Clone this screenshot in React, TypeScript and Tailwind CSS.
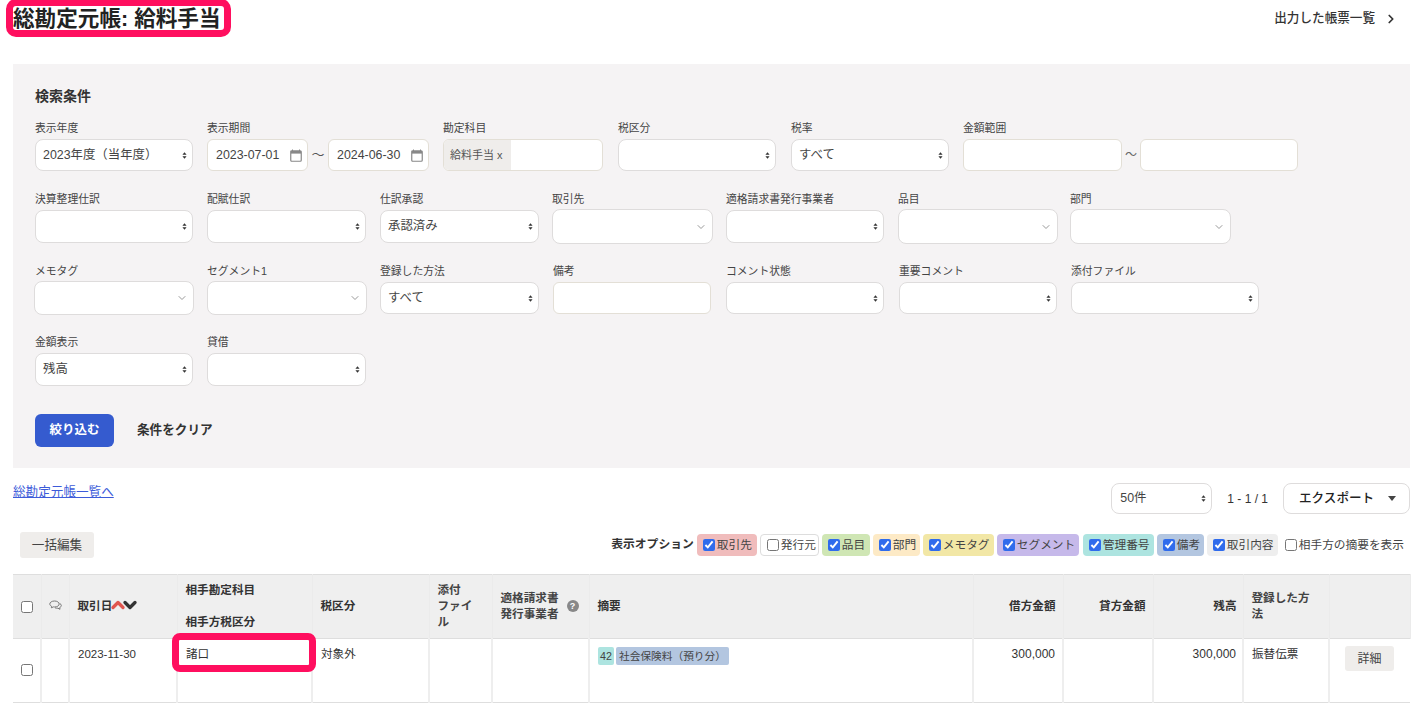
import type { ReactNode } from "react"
import { ChevronDown, ChevronRight, ChevronUp } from "lucide-react"

const Arrows = () => (
  <svg width="5" height="9" viewBox="0 0 6 10" className="shrink-0">
    <path d="M3 1 L5.5 4 H0.5 Z M3 9 L0.5 6 H5.5 Z" fill="#333" />
  </svg>
)

const CalendarIcon = () => (
  <svg width="12" height="13" viewBox="0 0 12 13" className="shrink-0">
    <path d="M2.5 0.5v2M9.5 0.5v2" stroke="#888" strokeWidth="1" />
    <rect x="0.75" y="1.75" width="10.5" height="10.5" rx="1" fill="none" stroke="#888" strokeWidth="1.2" />
    <rect x="1" y="2" width="10" height="2.6" fill="#888" />
  </svg>
)

const CommentIcon = () => (
  <svg width="13" height="11" viewBox="0 0 13 11" fill="none" stroke="#777" strokeWidth="1">
    <path d="M5.5 1C2.9 1 .8 2.3 .8 4c0 1 .7 1.8 1.8 2.3L2.4 7.8 4.4 6.9c.4.1.7.1 1.1.1 2.6 0 4.7-1.3 4.7-3S8.100 1 5.500 1Z" />
    <path d="M10.800 3.500c1 .5 1.500 1.200 1.500 2 0 .9-.6 1.600-1.600 2.100l.3 1.700-2.100-1.100c-.9.1-2 0-2.900-.4" />
  </svg>
)

function Select({ className, children }: { className: string; children?: ReactNode }) {
  return (
    <div className={`flex items-center justify-between bg-white border border-[#dedcdc] rounded-lg pl-[7px] pr-[5px] text-[12.4px] text-[#444] ${className}`}>
      <span>{children}</span>
      <Arrows />
    </div>
  )
}

function Combo({ className }: { className: string }) {
  return (
    <div className={`flex items-center justify-end bg-white border border-[#dedcdc] rounded-lg pr-[5px] ${className}`}>
      <ChevronDown size={12} color="#999" />
    </div>
  )
}

function Field({ label, className, children }: { label: string; className: string; children: ReactNode }) {
  return (
    <div className={className}>
      <div className="text-[10.8px] leading-[14px] text-[#444]">{label}</div>
      {children}
    </div>
  )
}

function DateInput({ value }: { value: string }) {
  return (
    <div className="flex items-center justify-between w-[101px] h-8 bg-white border border-[#e3dfd6] rounded-md pl-2 pr-[5px] text-[12.4px] text-[#444]">
      <span>{value}</span>
      <CalendarIcon />
    </div>
  )
}

function Chip({ label, className, checked = true }: { label: string; className: string; checked?: boolean }) {
  return (
    <label className={`flex items-center gap-[2px] h-[22px] rounded-sm pl-[6px] text-[11.7px] text-[#444] ${className}`}>
      <input type="checkbox" checked={checked} readOnly className="w-[12px] h-[12px] m-0 accent-[#2f6bec]" />
      <span>{label}</span>
    </label>
  )
}

export default function App() {
  return (
    <div className="h-[715px] overflow-hidden bg-white px-[13px] text-[#333] font-['Liberation_Sans','Noto_Sans_CJK_JP',sans-serif]">
      {/* Header */}
      <div className="flex justify-between h-16">
        <h1 className="relative h-[37px] flex items-center text-[21.6px] font-bold leading-none text-[#222]">
          総勘定元帳: 給料手当
          <span className="absolute left-[-7px] right-[-10px] top-[-1px] bottom-0 border-[7px] border-[#ff0f5f] rounded-[10px]" />
        </h1>
        <div className="flex items-center h-[37px] text-[12.6px] font-medium text-[#333] pr-[12px]">
          出力した帳票一覧
          <ChevronRight size={14} strokeWidth={3} className="ml-[9px]" />
        </div>
      </div>

      {/* Search panel */}
      <div className="bg-[#f5f3f4] h-[404px] pl-[22px] pt-[23px]">
        <div className="text-[14px] font-bold leading-[18px] text-[#333] mb-4">検索条件</div>

        <div className="flex items-start">
          <Field label="表示年度" className="w-[172px]">
            <Select className="w-[158px] h-8 mt-1">2023年度（当年度）</Select>
          </Field>
          <Field label="表示期間" className="w-[236px]">
            <div className="flex items-center mt-1">
              <DateInput value="2023-07-01" />
              <span className="w-5 text-center text-[13px] text-[#555]">～</span>
              <DateInput value="2024-06-30" />
            </div>
          </Field>
          <Field label="勘定科目" className="w-[175px]">
            <div className="flex w-[160px] h-8 mt-1 bg-white border border-[#e3dfd6] rounded-md overflow-hidden">
              <span className="flex items-center w-[67px] bg-[#efedeb] pl-[6px] text-[11px] text-[#555]">給料手当 x</span>
            </div>
          </Field>
          <Field label="税区分" className="w-[173px]">
            <Select className="w-[158px] h-8 mt-1" />
          </Field>
          <Field label="税率" className="w-[172px]">
            <Select className="w-[158px] h-8 mt-1">すべて</Select>
          </Field>
          <Field label="金額範囲" className="w-[335px]">
            <div className="flex items-center mt-1">
              <div className="w-[159px] h-8 bg-white border border-[#e3dfd6] rounded-md" />
              <span className="w-[18px] text-center text-[12px] text-[#666]">～</span>
              <div className="w-[158px] h-8 bg-white border border-[#e3dfd6] rounded-md" />
            </div>
          </Field>
        </div>

        <div className="flex items-start mt-[21px]">
          <Field label="決算整理仕訳" className="w-[172px]">
            <Select className="w-[158px] h-[33px] mt-1" />
          </Field>
          <Field label="配賦仕訳" className="w-[173px]">
            <Select className="w-[159px] h-[33px] mt-1" />
          </Field>
          <Field label="仕訳承認" className="w-[172px]">
            <Select className="w-[159px] h-[33px] mt-1">承認済み</Select>
          </Field>
          <Field label="取引先" className="w-[174px]">
            <Combo className="w-[161px] h-[35px] mt-[3px]" />
          </Field>
          <Field label="適格請求書発行事業者" className="w-[172px]">
            <Select className="w-[158px] h-[33px] mt-1" />
          </Field>
          <Field label="品目" className="w-[172px]">
            <Combo className="w-[160px] h-[35px] mt-[3px]" />
          </Field>
          <Field label="部門" className="w-[161px]">
            <Combo className="w-[161px] h-[35px] mt-[3px]" />
          </Field>
        </div>

        <div className="flex items-start mt-[20px] -ml-px">
          <Field label="メモタグ" className="w-[173px] [&>div:first-child]:pl-px">
            <Combo className="w-[160px] h-[34px] mt-[3px]" />
          </Field>
          <Field label="セグメント1" className="w-[173px]">
            <Combo className="w-[160px] h-[34px] mt-[3px]" />
          </Field>
          <Field label="登録した方法" className="w-[173px]">
            <Select className="w-[159px] h-[32px] mt-1">すべて</Select>
          </Field>
          <Field label="備考" className="w-[173px]">
            <div className="w-[158px] h-[32px] mt-1 bg-white border border-[#e3dfd6] rounded-md" />
          </Field>
          <Field label="コメント状態" className="w-[173px]">
            <Select className="w-[158px] h-[32px] mt-1" />
          </Field>
          <Field label="重要コメント" className="w-[172px]">
            <Select className="w-[158px] h-[32px] mt-1" />
          </Field>
          <Field label="添付ファイル" className="w-[188px]">
            <Select className="w-[188px] h-[32px] mt-1" />
          </Field>
        </div>

        <div className="flex items-start mt-[20px]">
          <Field label="金額表示" className="w-[172px]">
            <Select className="w-[158px] h-[33px] mt-1">残高</Select>
          </Field>
          <Field label="貸借" className="w-[159px]">
            <Select className="w-[159px] h-[33px] mt-1" />
          </Field>
        </div>

        <div className="flex items-center mt-[28px]">
          <button className="w-[79px] h-[33px] bg-[#355bcf] rounded-md text-white text-[12.5px] font-bold">絞り込む</button>
          <span className="ml-[23px] text-[12.6px] font-bold text-[#333]">条件をクリア</span>
        </div>
      </div>

      {/* Toolbar */}
      <div className="flex justify-between h-[64px]">
        <a className="mt-[16px] text-[12.6px] leading-[16px] text-[#3d5bd9] underline">総勘定元帳一覧へ</a>
        <div className="flex items-center h-[31px] mt-[15px]">
          <Select className="w-[101px] h-[31px]">
            <span className="ml-px">50件</span>
          </Select>
          <span className="ml-[15px] text-[12px] text-[#333]">1 - 1 / 1</span>
          <div className="flex items-center justify-between w-[127px] h-[31px] ml-[15px] bg-white border border-[#dedcdc] rounded-lg pl-[15px] pr-[13px] text-[12.6px] font-medium text-[#222]">
            エクスポート
            <svg width="8" height="5" viewBox="0 0 8 5"><path d="M0 0h8L4 5Z" fill="#444" /></svg>
          </div>
        </div>
      </div>

      <div className="flex items-center justify-between h-[26px] mb-[16px] pl-[7px] pr-[6px]">
        <button className="w-[74px] h-[26px] bg-[#efedeb] rounded-[3px] text-[12.6px] text-[#444]">一括編集</button>
        <div className="flex items-center gap-[3px]">
          <span className="text-[11.8px] font-bold text-[#333]">表示オプション</span>
          <Chip label="取引先" className="w-[60px] bg-[#f0bcbc]" />
          <Chip label="発行元" checked={false} className="w-[59px] bg-white border border-[#ddd] pl-[5px]" />
          <Chip label="品目" className="w-[48px] bg-[#cfe6b4]" />
          <Chip label="部門" className="w-[47px] bg-[#fdeac6]" />
          <Chip label="メモタグ" className="w-[71px] bg-[#f2e7a6]" />
          <Chip label="セグメント" className="w-[82px] mr-px bg-[#c6b9ea]" />
          <Chip label="管理番号" className="w-[71px] bg-[#ade4e0]" />
          <Chip label="備考" className="w-[47px] bg-[#b3c6e0]" />
          <Chip label="取引内容" className="w-[71px] bg-[#eeeeee]" />
          <label className="flex items-center gap-[2px] ml-[4px] text-[11.7px] text-[#444]">
            <input type="checkbox" readOnly className="w-[12px] h-[12px] m-0" />
            相手方の摘要を表示
          </label>
        </div>
      </div>

      {/* Ledger table */}
      <table className="w-[1397px] table-fixed border-collapse text-[11.6px] text-[#333]">
        <colgroup>
          <col className="w-[28px]" />
          <col className="w-[28px]" />
          <col className="w-[108px]" />
          <col className="w-[135px]" />
          <col className="w-[117px]" />
          <col className="w-[63px]" />
          <col className="w-[97px]" />
          <col className="w-[384px]" />
          <col className="w-[90px]" />
          <col className="w-[90px]" />
          <col className="w-[90px]" />
          <col className="w-[86px]" />
          <col className="w-[81px]" />
        </colgroup>
        <thead>
          <tr className="h-[64px] bg-[#efefef] border-y border-[#dedede] font-bold text-left [&>th]:pb-[2px] [&>th]:border-x [&>th]:border-[#ebebeb] [&>th]:border-l-0 [&>th]:border-r-[#ebebeb]">
            <th className="text-center align-middle">
              <input type="checkbox" readOnly className="w-[12px] h-[12px] m-0 align-middle" />
            </th>
            <th>
              <div className="flex justify-center"><CommentIcon /></div>
            </th>
            <th className="pl-2">
              <div className="flex items-center">
                取引日
                <ChevronUp size={20} strokeWidth={4} color="#e0564f" className="-ml-[4px] -mr-[4px] -my-1" />
                <ChevronDown size={20} strokeWidth={4} color="#333" className="-ml-[4px] -my-1" />
              </div>
            </th>
            <th className="pl-2">
              <div className="leading-4 mb-4">相手勘定科目</div>
              <div className="leading-4">相手方税区分</div>
            </th>
            <th className="pl-2">税区分</th>
            <th className="pl-2 leading-[16px] font-semibold text-[#444]">
              添付
              <br />
              ファイ
              <br />
              ル
            </th>
            <th className="pl-2 font-semibold text-[#444]">
              <div className="flex items-center leading-4">
                <span className="w-[60px]">適格請求書発行事業者</span>
                <span className="ml-[6px] flex items-center justify-center w-3 h-3 rounded-full bg-[#888] text-white text-[9px] font-bold">?</span>
              </div>
            </th>
            <th className="pl-2">摘要</th>
            <th className="pr-[7px] text-right">借方金額</th>
            <th className="pr-[7px] text-right">貸方金額</th>
            <th className="pr-[6px] text-right">残高</th>
            <th className="pl-2 pr-2 leading-[16px] font-semibold text-[#444]">登録した方法</th>
            <th />
          </tr>
        </thead>
        <tbody>
          <tr className="h-[64px] border-b border-[#dedede] align-top [&>td]:border-r-2 [&>td]:border-[#eeeeee] [&>td:last-child]:border-r-0">
            <td className="text-center align-middle pb-[4px]">
              <input type="checkbox" readOnly className="w-[12px] h-[12px] m-0 align-middle" />
            </td>
            <td />
            <td className="pl-2 pt-[7px] leading-4 text-[11.5px]">2023-11-30</td>
            <td className="relative pl-2 pt-[7px] leading-4">
              諸口
              <span className="absolute left-[-6px] right-[-5px] top-[-6px] h-[39px] border-[7px] border-[#ff0f5f] rounded-[8px]" />
            </td>
            <td className="pl-2 pt-[7px] leading-4">対象外</td>
            <td />
            <td />
            <td className="pl-2 pt-2">
              <div className="flex items-center gap-[2px] text-[10.7px] text-[#444]">
                <span className="flex items-center justify-center w-[16px] h-[18px] rounded-[2px] bg-[#ade4e0]">42</span>
                <span className="flex items-center h-[18px] px-[3px] rounded-[2px] bg-[#b3c6e0]">社会保険料（預り分）</span>
              </div>
            </td>
            <td className="pr-[7px] pt-[7px] leading-4 text-right text-[12px]">300,000</td>
            <td />
            <td className="pr-[6px] pt-[7px] leading-4 text-right text-[12px]">300,000</td>
            <td className="pl-2 pt-[7px] leading-4">振替伝票</td>
            <td className="pl-[15px] pt-[7px]">
              <button className="w-[49px] h-[25px] bg-[#efedeb] rounded-[3px] text-[12px] text-[#444]">詳細</button>
            </td>
          </tr>
        </tbody>
      </table>
    </div>
  )
}
